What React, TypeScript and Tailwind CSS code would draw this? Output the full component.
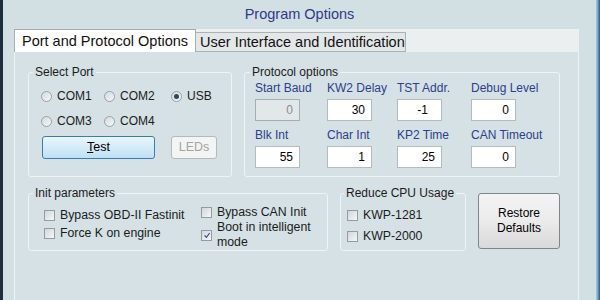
import React from 'react';

function Radio({ label, checked, className }: { label: string; checked?: boolean; className?: string }) {
    return (
        <div className={`flex h-[16px] items-center gap-[5px] ${className ?? ''}`}>
            <span className="flex h-[11px] w-[11px] shrink-0 items-center justify-center rounded-full border border-[#97a2a8] bg-linear-to-br from-[#d3d9dc] to-[#f7f8f8]">
                {checked && <span className="h-[5px] w-[5px] rounded-full bg-[#2a4660]" />}
            </span>
            <span>{label}</span>
        </div>
    );
}

function Check({ label, checked, className }: { label: string; checked?: boolean; className?: string }) {
    return (
        <div className={`flex items-center gap-[5px] text-[12.3px] ${className ?? ''}`}>
            <span className="flex h-[11px] w-[11px] shrink-0 items-center justify-center border border-[#939ca1] bg-linear-to-br from-[#d2d7da] to-[#f6f7f7]">
                {checked && (
                    <svg viewBox="0 0 10 10" className="h-[8px] w-[8px]">
                        <path d="M2 5.5 L4.3 8 L8.3 2.5" stroke="#3a4a8c" strokeWidth="1.5" fill="none" />
                    </svg>
                )}
            </span>
            <span>{label}</span>
        </div>
    );
}

function Field({ label, value, disabled, pad }: { label: string; value: string; disabled?: boolean; pad?: string }) {
    return (
        <div>
            <div className="leading-[16px] text-[#2e3d8c]">{label}</div>
            <div
                className={`mt-[3px] h-[22px] w-[45px] border text-right leading-[20px] ${pad ?? 'pr-[6px]'} ${
                    disabled ? 'border-[#a6aeb2] bg-[#e2e8e9] text-[#8c8c8c]' : 'border-[#b3bbbf] bg-white text-black'
                }`}
            >
                {value}
            </div>
        </div>
    );
}

export default function App() {
    return (
        <div className="flex h-[300px] w-[600px] overflow-hidden bg-[#d3e0e3] font-['Liberation_Sans',Arial,sans-serif] text-[12px] leading-[15px] text-[#1b1b1b]">
            <div className="w-[3px] bg-[#1e2d3d]" />
            <div className="flex min-w-0 flex-1 flex-col">
                <div className="flex h-[29px] items-center justify-center text-[14.5px] text-[#2d3a8c]">Program Options</div>
                <div className="ml-[11px] mr-[17px] flex flex-1 flex-col">
                    {/* tabs */}
                    <div className="flex h-[23px] items-end bg-[#eceff0] text-[14.5px] text-[#111]">
                        <div className="flex h-[23px] w-[182px] items-center border-x border-t border-[#a3adb2] bg-white pl-[7px]">
                            Port and Protocol Options
                        </div>
                        <div className="flex h-[20px] w-[210px] items-center border-r border-t border-b border-[#a9b2b6] bg-[#e4e7e8] pl-[4px]">
                            User Interface and Identification
                        </div>
                    </div>
                    {/* panel */}
                    <div className="flex-1 border-x border-[#eef3f4] bg-[#d5e1e4] pl-[13px] pt-[13px]">
                        <div className="flex gap-[12px]">
                            <fieldset className="h-[112px] w-[204px] rounded-[3px] border border-[#eef4f5] pl-[12px]">
                                <legend className="ml-[-8px] px-[2px]">Select Port</legend>
                                <div className="mt-[8px] flex">
                                    <Radio label="COM1" className="w-[63px]" />
                                    <Radio label="COM2" className="w-[67px]" />
                                    <Radio label="USB" checked />
                                </div>
                                <div className="mt-[9px] flex">
                                    <Radio label="COM3" className="w-[63px]" />
                                    <Radio label="COM4" />
                                </div>
                                <div className="ml-[1px] mt-[7px] flex gap-[16px]">
                                    <button className="h-[23px] w-[113px] rounded-[3px] border border-[#3c7cae] bg-linear-to-b from-[#e9f6fd] to-[#bee1f4] text-[12.5px] text-black">
                                        <span className="underline">T</span>est
                                    </button>
                                    <button className="h-[23px] w-[46px] rounded-[3px] border border-[#b3b9bc] bg-[#f3f4f4] text-[12.5px] text-[#a3a3a3]">
                                        LEDs
                                    </button>
                                </div>
                            </fieldset>
                            <fieldset className="h-[112px] w-[316px] rounded-[3px] border border-[#eef4f5] pl-[10px]">
                                <legend className="ml-[-5px] px-[2px]">Protocol options</legend>
                                <div className="grid grid-cols-[72px_70px_74px_72px] gap-y-[6px]">
                                    <Field label="Start Baud" value="0" disabled />
                                    <Field label="KW2 Delay" value="30" />
                                    <Field label="TST Addr." value="-1" pad="pr-[13px]" />
                                    <Field label="Debug Level" value="0" />
                                    <Field label="Blk Int" value="55" />
                                    <Field label="Char Int" value="1" />
                                    <Field label="KP2 Time" value="25" />
                                    <Field label="CAN Timeout" value="0" />
                                </div>
                            </fieldset>
                        </div>
                        <div className="mt-[9px] flex items-start gap-[12px]">
                            <fieldset className="h-[65px] w-[300px] rounded-[3px] border border-[#eef4f5] pl-[15px]">
                                <legend className="ml-[-11px] px-[2px]">Init parameters</legend>
                                <div className="flex">
                                    <div className="mt-[6px] flex w-[157px] flex-col gap-[2px]">
                                        <Check label="Bypass OBD-II Fastinit" className="h-[16px]" />
                                        <Check label="Force K on engine" className="h-[16px]" />
                                    </div>
                                    <div className="mt-[4px] flex w-[126px] flex-col">
                                        <Check label="Bypass CAN Init" />
                                        <Check label="Boot in intelligent mode" checked />
                                    </div>
                                </div>
                            </fieldset>
                            <fieldset className="h-[65px] w-[126px] rounded-[3px] border border-[#eef4f5] pl-[6px]">
                                <legend className="ml-[-3px] px-[2px]">Reduce CPU Usage</legend>
                                <div className="mt-[6px] flex flex-col gap-[5px]">
                                    <Check label="KWP-1281" className="h-[16px]" />
                                    <Check label="KWP-2000" className="h-[16px]" />
                                </div>
                            </fieldset>
                            <button className="mt-[7px] flex h-[56px] w-[82px] flex-col items-center justify-center rounded-[3px] border border-[#7f8589] bg-linear-to-b from-[#f4f4f4] via-[#ebebeb] to-[#d9d9d9] text-[12px] leading-[15px] text-black">
                                <span>Restore</span>
                                <span>Defaults</span>
                            </button>
                        </div>
                    </div>
                </div>
            </div>
            <div className="w-[4px] bg-linear-to-r from-[#abcfe2] via-[#6d9ec2] to-[#2c5275]" />
        </div>
    );
}
